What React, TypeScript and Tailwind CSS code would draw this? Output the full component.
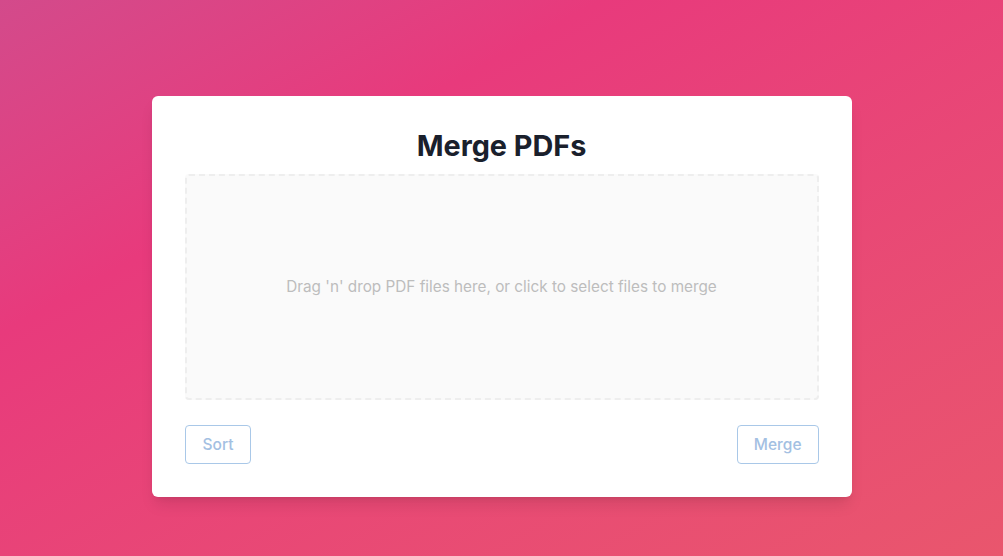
export default function App() {
  return (
    <div className="min-h-screen w-full flex items-start justify-center pt-[96px] bg-gradient-to-br from-[#d34a8b] from-0% via-[#e83a7c] via-30% to-[#e9566d] to-100% font-['Inter','Liberation_Sans',sans-serif]">
      <div className="w-[700px] rounded-md bg-white px-[33px] pt-8 pb-[33px] shadow-lg">
        <h1 className="text-center text-[28.8px] leading-9 font-bold text-[#1a202c] mb-2.5">
          Merge PDFs
        </h1>
        <div className="h-[226px] flex items-center justify-center border-2 border-dashed border-[#eeeeee] bg-[#fafafa] rounded-sm text-[#bdbdbd] text-[15.3px] cursor-pointer">
          Drag 'n' drop PDF files here, or click to select files to merge
        </div>
        <div className="mt-[25px] flex items-center justify-between">
          <button
            disabled
            className="h-[39px] px-[17px] rounded border border-[#a9c8e8] text-[#a3c0e2] font-medium text-[15.5px]"
          >
            Sort
          </button>
          <button
            disabled
            className="h-[39px] px-4 rounded border border-[#a9c8e8] text-[#a3c0e2] font-medium text-[15.5px]"
          >
            Merge
          </button>
        </div>
      </div>
    </div>
  )
}
